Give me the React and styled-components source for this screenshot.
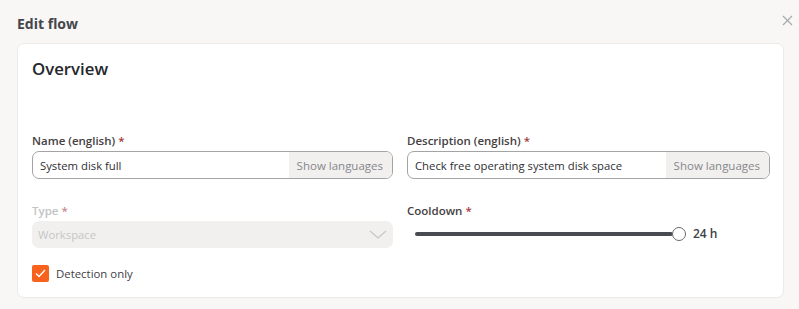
import React from 'react';
import styled, { createGlobalStyle } from 'styled-components';

const GlobalStyle = createGlobalStyle`
    html, body {
        margin: 0;
        padding: 0;
        background: #f8f7f6;
        font-family: "Open Sans", "Liberation Sans", sans-serif;
    }
`;

const Dialog = styled.div`
    width: 799px;
    height: 309px;
    box-sizing: border-box;
    padding: 0 15px 0 17px;
    background: #f8f7f6;
`;

const Header = styled.div`
    display: flex;
    align-items: center;
    justify-content: space-between;
    height: 43px;
    box-sizing: border-box;
    padding-top: 4px;
`;

const Title = styled.h1`
    margin: 0;
    font-size: 14px;
    font-weight: 700;
    color: #45464b;
`;

const CloseButton = styled.button`
    border: none;
    background: none;
    padding: 0;
    margin-right: -9px;
    margin-top: -7px;
    display: flex;
    color: #a7a9ae;
`;

const Card = styled.div`
    background: #fff;
    border: 1px solid #ebeae8;
    border-radius: 7px;
    height: 255px;
    box-sizing: border-box;
    padding: 12px 12px 0 14px;
`;

const CardTitle = styled.h2`
    margin: 0 0 50px;
    font-size: 16.8px;
    font-weight: 600;
    color: #25272c;
    line-height: 26px;
`;

const Grid = styled.div`
    display: grid;
    grid-template-columns: 361px 363px;
    column-gap: 14px;
    row-gap: 23px;
`;

const Field = styled.div`
    display: flex;
    flex-direction: column;
`;

const Label = styled.label`
    font-size: 11.5px;
    font-weight: 600;
    line-height: 17px;
    margin-bottom: 2px;
    color: ${p => (p.disabled ? '#c3c3c3' : '#45403f')};
`;

const Req = styled.span`
    color: ${p => (p.disabled ? '#c98a8a' : '#a23a3a')};
`;

const InputGroup = styled.div`
    display: flex;
    height: 28px;
    border: 1px solid #a4a4a4;
    border-radius: 7px;
    overflow: hidden;
    box-sizing: border-box;
`;

const TextInput = styled.div`
    flex: 1;
    display: flex;
    align-items: center;
    padding: 0 7px;
    font-size: 11.3px;
    color: #2f3035;
`;

const Addon = styled.div`
    display: flex;
    align-items: center;
    padding: 0 9px 0 8px;
    background: #f1f0ef;
    font-size: 11.5px;
    color: #86878b;
`;

const Select = styled.div`
    display: flex;
    align-items: center;
    justify-content: space-between;
    height: 27px;
    border-radius: 7px;
    background: #f1f0ef;
    padding: 0 6px 0 6px;
    font-size: 11.3px;
    color: #c6c6c6;
`;

const SliderRow = styled.div`
    display: flex;
    align-items: center;
    height: 25px;
    padding-left: 8px;
`;

const Track = styled.div`
    flex: 0 0 258px;
    height: 4px;
    background: #4a4b50;
    border-radius: 2px;
`;

const Thumb = styled.div`
    width: 12px;
    height: 12px;
    border: 1px solid #6a6b70;
    border-radius: 50%;
    background: #fff;
    margin-left: -1px;
`;

const SliderValue = styled.span`
    margin-left: 7px;
    font-size: 12px;
    font-weight: 600;
    color: #3f4045;
`;

const CheckRow = styled.label`
    display: flex;
    align-items: center;
    gap: 7px;
    margin-top: 17px;
    font-size: 11.4px;
    color: #3f4045;
`;

const Box = styled.span`
    width: 17px;
    height: 17px;
    border-radius: 2px;
    background: #f7621c;
    display: flex;
    align-items: center;
    justify-content: center;
`;

export default function App() {
    return (
        <Dialog>
            <GlobalStyle />
            <Header>
                <Title>Edit flow</Title>
                <CloseButton aria-label="Close">
                    <svg width="11" height="11" viewBox="0 0 11 11">
                        <path d="M1 1L10 10M10 1L1 10" stroke="currentColor" strokeWidth="1.2" />
                    </svg>
                </CloseButton>
            </Header>
            <Card>
                <CardTitle>Overview</CardTitle>
                <Grid>
                    <Field>
                        <Label>Name (english) <Req>*</Req></Label>
                        <InputGroup>
                            <TextInput>System disk full</TextInput>
                            <Addon>Show languages</Addon>
                        </InputGroup>
                    </Field>
                    <Field>
                        <Label>Description (english) <Req>*</Req></Label>
                        <InputGroup>
                            <TextInput>Check free operating system disk space</TextInput>
                            <Addon>Show languages</Addon>
                        </InputGroup>
                    </Field>
                    <Field>
                        <Label disabled>Type <Req disabled>*</Req></Label>
                        <Select>
                            Workspace
                            <svg width="18" height="10" viewBox="0 0 18 10">
                                <path d="M1 1L9 8L17 1" fill="none" stroke="#c6c6c6" strokeWidth="1.2" />
                            </svg>
                        </Select>
                    </Field>
                    <Field>
                        <Label>Cooldown <Req>*</Req></Label>
                        <SliderRow>
                            <Track />
                            <Thumb />
                            <SliderValue>24 h</SliderValue>
                        </SliderRow>
                    </Field>
                </Grid>
                <CheckRow>
                    <Box>
                        <svg width="11" height="9" viewBox="0 0 11 9">
                            <path d="M1 4.5L4 7.5L10 1" fill="none" stroke="#fff" strokeWidth="1.4" />
                        </svg>
                    </Box>
                    Detection only
                </CheckRow>
            </Card>
        </Dialog>
    );
}
